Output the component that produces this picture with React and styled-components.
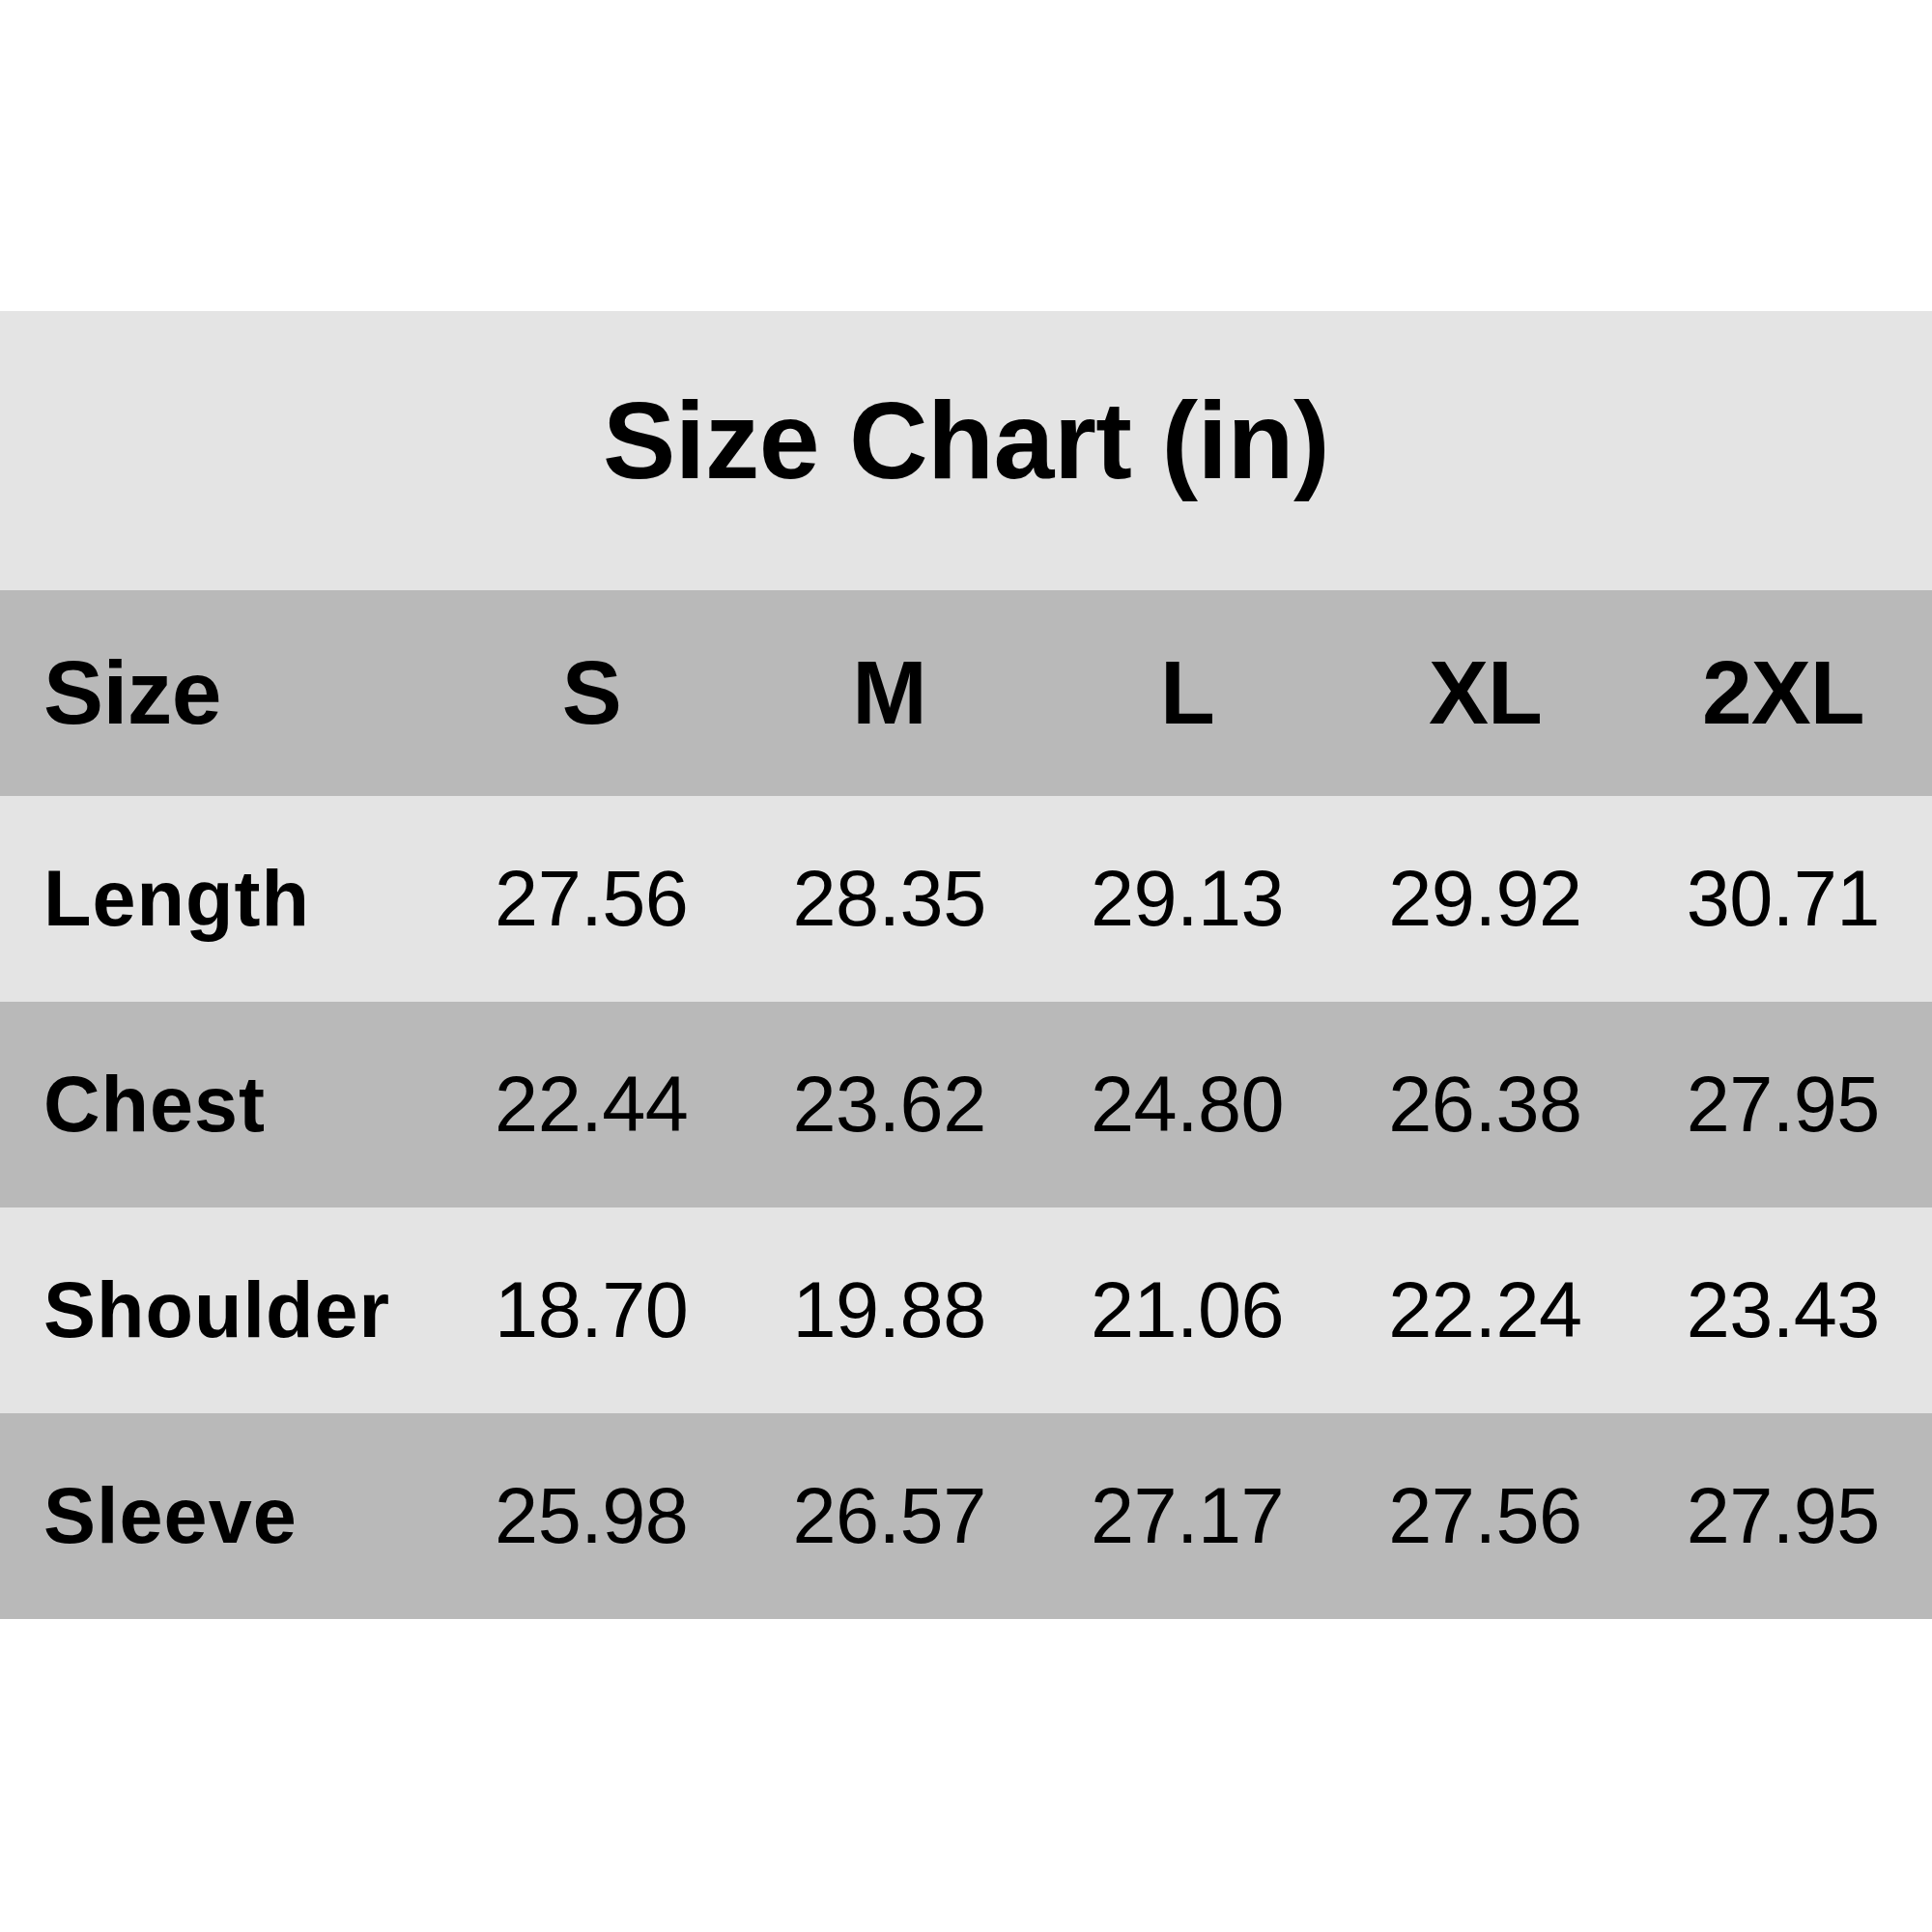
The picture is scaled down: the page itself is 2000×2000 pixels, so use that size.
import React from "react";
import styled, { createGlobalStyle } from "styled-components";

const GlobalStyle = createGlobalStyle`
  body {
    margin: 0;
    background: #ffffff;
    font-family: "Liberation Sans", Arial, sans-serif;
    color: #000000;
  }
`;

const Page = styled.div`
  width: 2000px;
  height: 2000px;
  padding-top: 322px;
  box-sizing: border-box;
  background: #ffffff;
`;

const TitleBand = styled.div`
  height: 289px;
  background: #e4e4e4;
  display: flex;
  align-items: center;
  justify-content: center;
  padding-bottom: 20px;
  box-sizing: border-box;
`;

const Title = styled.h1`
  margin: 0;
  font-size: 113px;
  font-weight: 700;
  letter-spacing: -0.5px;
  line-height: 1;
`;

const Row = styled.div`
  display: grid;
  grid-template-columns: 458px repeat(5, 1fr);
  align-items: center;
  height: 213px;
  background: ${(props) => (props.dark ? "#b9b9b9" : "#e4e4e4")};
`;

const Label = styled.div`
  padding-left: 45px;
  font-size: ${(props) => (props.head ? "93px" : "81px")};
  font-weight: 700;
  letter-spacing: ${(props) => (props.head ? "-0.5px" : "1px")};
  line-height: 1;
`;

const Cell = styled.div`
  text-align: center;
  font-size: ${(props) => (props.head ? "93px" : "81px")};
  font-weight: ${(props) => (props.head ? 700 : 400)};
  letter-spacing: ${(props) => (props.head ? "-1px" : "-0.5px")};
  line-height: 1;
`;

const sizes = ["S", "M", "L", "XL", "2XL"];

const rows = [
  { name: "Length", values: ["27.56", "28.35", "29.13", "29.92", "30.71"] },
  { name: "Chest", values: ["22.44", "23.62", "24.80", "26.38", "27.95"] },
  { name: "Shoulder", values: ["18.70", "19.88", "21.06", "22.24", "23.43"] },
  { name: "Sleeve", values: ["25.98", "26.57", "27.17", "27.56", "27.95"] },
];

const App = () => {
  return (
    <Page>
      <GlobalStyle />
      <TitleBand>
        <Title>Size Chart (in)</Title>
      </TitleBand>
      <Row dark>
        <Label head>Size</Label>
        {sizes.map((s) => (
          <Cell head key={s}>
            {s}
          </Cell>
        ))}
      </Row>
      {rows.map((row, i) => (
        <Row dark={i % 2 === 1} key={row.name}>
          <Label>{row.name}</Label>
          {row.values.map((v, j) => (
            <Cell key={j}>{v}</Cell>
          ))}
        </Row>
      ))}
    </Page>
  );
};

export default App;
